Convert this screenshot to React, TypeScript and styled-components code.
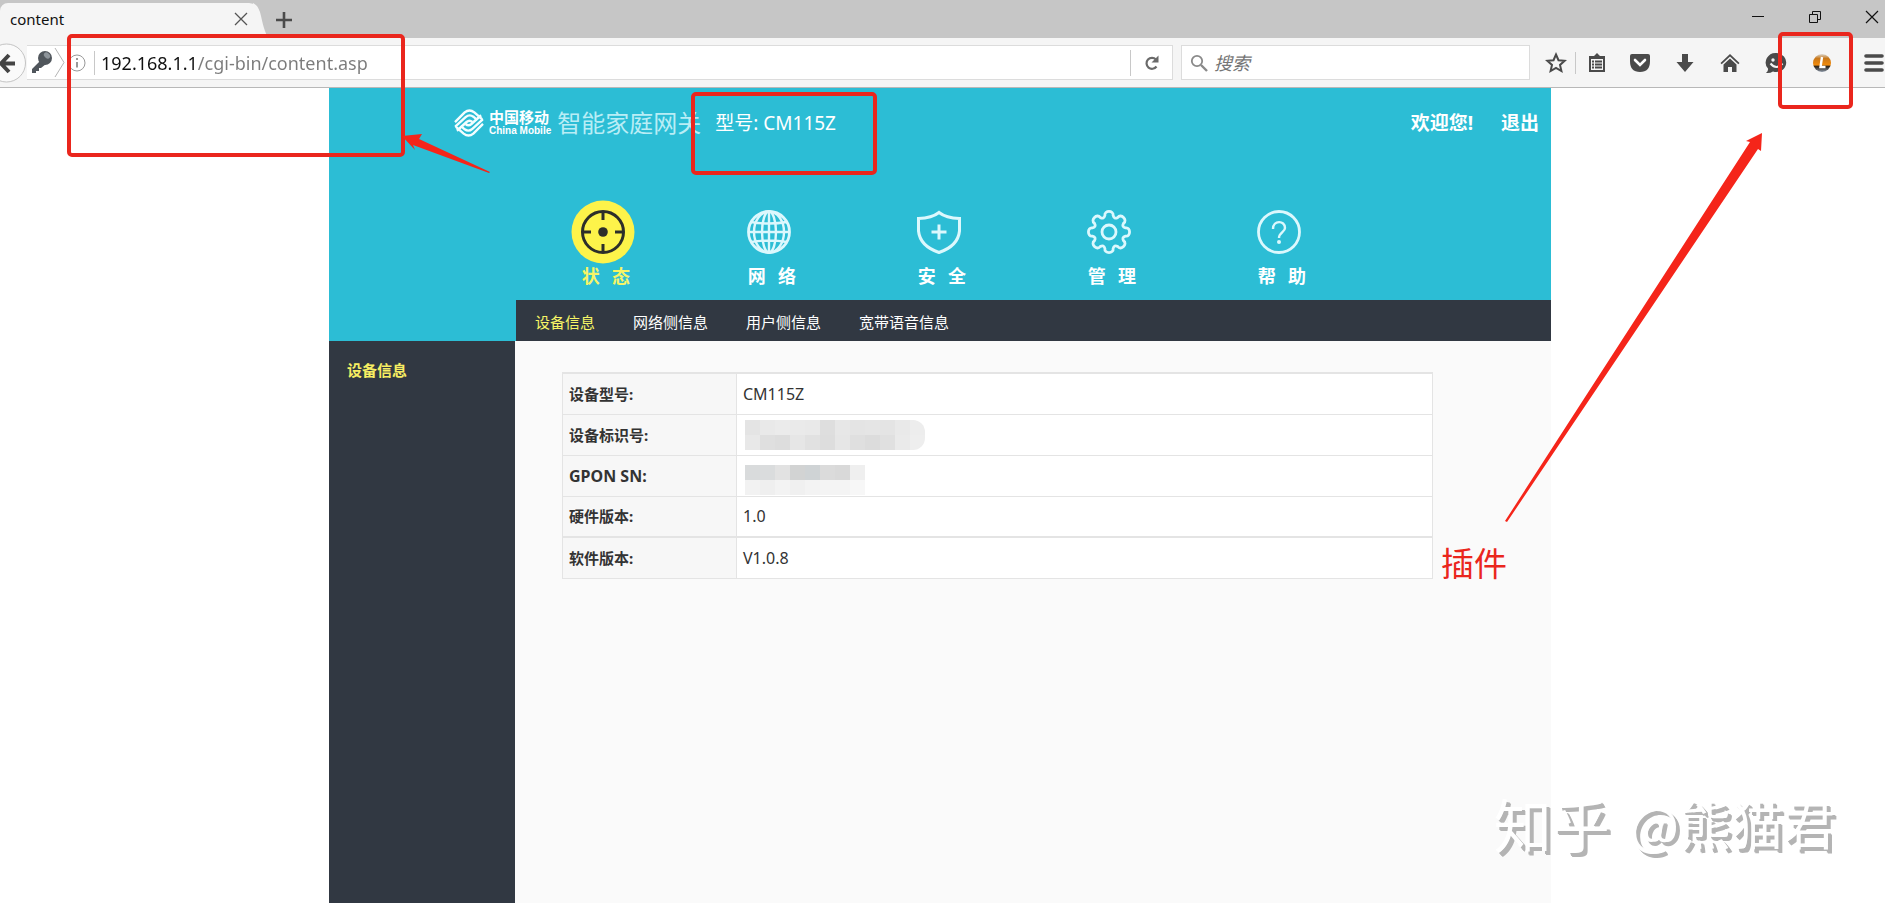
import React from "react";
import styled, { createGlobalStyle } from "styled-components";

const RED = "#ea261d";
const TEAL = "#2cbdd5";
const DARK = "#313842";
const YELLOW = "#fdf34a";
const PALE_YELLOW = "#f6f566";

const GlobalStyle = createGlobalStyle`
  * { box-sizing: border-box; }
  html, body { margin: 0; padding: 0; background: #fff; }
  body { font-family: "Noto Sans", "Noto Sans CJK SC", sans-serif; color: #333; }
  button, input { font-family: inherit; }
  a { color: inherit; text-decoration: none; }
`;

const Screen = styled.div`
  position: relative;
  display: flex;
  flex-direction: column;
  min-height: 100vh;
  overflow: hidden;
`;

const TabStrip = styled.header`
  display: flex;
  align-items: flex-end;
  height: 38px;
  background: #c6c6c6;
`;

const Tab = styled.div`
  display: flex;
  align-items: center;
  justify-content: space-between;
  width: 259px;
  height: 35px;
  padding: 0 10px 3px;
  background: #f5f5f5;
  border-radius: 8px 10px 0 0;
  font-size: 15px;
  line-height: 20px;
  color: #111;
`;

const TabEdge = styled.svg`
  width: 16px;
  height: 35px;
  margin-left: -6px;
`;

const IconButton = styled.button<{ $width?: number; $height?: number }>`
  display: flex;
  align-items: center;
  justify-content: center;
  width: ${(p) => p.$width ?? 30}px;
  height: ${(p) => p.$height ?? 34}px;
  padding: 0;
  border: 0;
  background: none;
  color: #4a4a4a;
  flex: none;
`;

const WindowControls = styled.div`
  display: flex;
  align-self: stretch;
  margin-left: auto;
  margin-right: -2px;
  gap: 27px;
  color: #111;
`;

const Toolbar = styled.div`
  display: flex;
  align-items: center;
  height: 50px;
  background: #f5f5f5;
  border-bottom: 1px solid #b8b8b8;
`;

const AddressBar = styled.div`
  display: flex;
  align-items: center;
  flex: 1;
  height: 35px;
  background: #fff;
  border: 1px solid #dcdcdc;
  border-left: 0;
`;

const Divider = styled.span<{ $height: number }>`
  width: 1px;
  height: ${(p) => p.$height}px;
  background: #c8c8c8;
  flex: none;
`;

const AddressInput = styled.input`
  flex: 1;
  min-width: 0;
  height: 32px;
  padding: 0 0 0 6px;
  border: 0;
  outline: 0;
  font-size: 18px;
  background: linear-gradient(90deg, #111 102px, #7b7b7b 102px);
  background-clip: text;
  -webkit-background-clip: text;
  color: transparent;
`;

const SearchBox = styled.label`
  display: flex;
  align-items: center;
  width: 349px;
  height: 35px;
  margin-left: 8px;
  padding: 0 8px;
  gap: 6px;
  background: #fff;
  border: 1px solid #dcdcdc;
`;

const SearchInput = styled.input`
  flex: 1;
  min-width: 0;
  border: 0;
  outline: 0;
  padding: 0;
  font-size: 18px;
  font-style: italic;
  &::placeholder { color: #757575; opacity: 1; }
`;

const ToolbarIcons = styled.div`
  display: flex;
  align-items: center;
  width: 355px;
  padding-left: 11px;
  flex: none;
  ${Divider} { margin-left: 4px; }
  > :last-child { margin-left: auto; }
`;

const Gateway = styled.main`
  display: flex;
  flex-direction: column;
  flex: 1;
  width: 100%;
  max-width: 1227px;
  padding-right: 5px;
  margin: 0 auto;
`;

const Masthead = styled.div`
  display: grid;
  grid-template-columns: 187px 1fr;
  grid-template-rows: 212px 41px;
  background: ${TEAL};
  color: #fff;
`;

const MastheadTop = styled.div`
  grid-column: 1 / 3;
  display: flex;
  flex-direction: column;
  justify-content: space-between;
  padding-bottom: 14px;
`;

const BrandRow = styled.div`
  display: flex;
  align-items: center;
  height: 69px;
  padding: 0 12px 0 125px;
`;

const BrandName = styled.div`
  display: flex;
  flex-direction: column;
  margin: 0 6px 0 5px;
  font-weight: 700;
  font-size: 15px;
  line-height: 16px;
`;

const BrandLatin = styled.span`
  font-family: "Liberation Sans", sans-serif;
  font-size: 10px;
  line-height: 12px;
`;

const ProductName = styled.h1`
  margin: 0 14px 0 0;
  font-size: 24px;
  line-height: 32px;
  font-weight: 400;
  color: #b9edf5;
`;

const Model = styled.span`
  font-size: 19px;
  line-height: 28px;
`;

const Account = styled.div`
  display: flex;
  gap: 28px;
  margin-left: auto;
  font-size: 19px;
  line-height: 28px;
  font-weight: 700;
`;

const MainNav = styled.nav`
  display: flex;
  padding-left: 193px;
`;

const NavItem = styled.a<{ $active?: boolean }>`
  display: flex;
  flex-direction: column;
  align-items: center;
  width: ${(p) => (p.$active ? 162 : 170)}px;
  color: ${(p) => (p.$active ? PALE_YELLOW : "#fff")};
  svg { display: block; }
`;

const NavLabel = styled.span`
  padding-left: 6px;
  font-family: "Noto Sans CJK SC", sans-serif;
  font-size: 18px;
  line-height: 22px;
  font-weight: 700;
  white-space: pre;
`;

const SubNav = styled.nav`
  grid-column: 2;
  display: flex;
  align-items: center;
  gap: 38px;
  padding: 2px 19px 0;
  background: ${DARK};
  font-size: 15px;
  line-height: 20px;
`;

const SubLink = styled.a<{ $active?: boolean }>`
  color: ${(p) => (p.$active ? PALE_YELLOW : "#fff")};
`;

const Body = styled.div`
  display: flex;
  flex: 1;
`;

const Sidebar = styled.aside`
  width: 186px;
  padding: 19px 18px;
  background: ${DARK};
  color: #f7ee62;
  font-size: 15px;
  line-height: 20px;
  font-weight: 700;
`;

const Content = styled.section`
  flex: 1;
  padding: 31px 118px 0 47px;
  background: #fafafa;
`;

const InfoTable = styled.table`
  width: 100%;
  border-collapse: collapse;
  border: 1px solid #e4e4e4;
  font-size: 15px;
  line-height: 20px;
  th, td {
    height: 41px;
    padding: 0 6px;
    border: 1px solid #e4e4e4;
    text-align: left;
  }
  td { background: #fff; font-size: 16px; }
  tr:first-child > *, tr:last-child > * { border-top-width: 2px; }
`;

const RowName = styled.th<{ $latin?: boolean }>`
  width: 174px;
  background: #f7f7f7;
  font-size: ${(p) => (p.$latin ? 16 : 15)}px;
  font-weight: 700;
`;

const Mosaic = styled.div<{ $radius: number; $top: number }>`
  display: grid;
  grid-template-columns: repeat(12, 15px);
  grid-auto-rows: 15px;
  width: max-content;
  margin: ${(p) => p.$top}px 0 0 2px;
  border-radius: 0 ${(p) => p.$radius}px ${(p) => p.$radius}px 0;
  overflow: hidden;
`;

const Tile = styled.span<{ $shade: string }>`
  background: ${(p) => p.$shade};
`;

const Frame = styled.div<{ $x: number; $y: number; $w: number; $h: number }>`
  position: absolute;
  left: ${(p) => p.$x}px;
  top: ${(p) => p.$y}px;
  width: ${(p) => p.$w}px;
  height: ${(p) => p.$h}px;
  border: 4px solid ${RED};
  border-radius: 5px;
  pointer-events: none;
`;

const Arrows = styled.svg`
  position: absolute;
  left: 0;
  top: 0;
  pointer-events: none;
`;

const PluginNote = styled.span`
  position: absolute;
  left: 1441px;
  top: 538px;
  font-family: "Noto Sans CJK SC", sans-serif;
  font-size: 33px;
  line-height: 48px;
  color: ${RED};
`;

const Watermark = styled.div`
  position: absolute;
  right: 50px;
  bottom: 44px;
  display: flex;
  align-items: center;
  gap: 20px;
  font-family: "Noto Sans CJK SC", sans-serif;
  font-size: 52px;
  line-height: 72px;
  color: #fff;
  white-space: nowrap;
  text-shadow: 3px 3px 0 #b4b4b4, 4px 4px 0 #b4b4b4;
`;

const WatermarkSite = styled.span`
  font-size: 58px;
`;

const LogoMark = () => {
  const band = (
    <>
      <path d="M1 15Q7 9 11 5Q16 1 21 5L29 12" />
      <path d="M1 20L12 10Q16 6.500 20 9.500L24 13" />
      <path d="M3 24L13 15Q16 12.500 19 15" />
    </>
  );
  return (
    <svg width="30" height="32" viewBox="0 0 31 32" fill="none" stroke="#f4feff" strokeWidth="2.500">
      <clipPath id="logo-round">
        <ellipse cx="15.500" cy="16" rx="15.500" ry="16" />
      </clipPath>
      <g clipPath="url(#logo-round)">
        {band}
        <g transform="rotate(180 15.500 16)">{band}</g>
      </g>
    </svg>
  );
};

const StatusIcon = () => (
  <svg width="64" height="64" viewBox="0 0 64 64" fill="none" stroke="#2d2e2a" strokeWidth="3">
    <circle cx="32" cy="32" r="31.500" fill={YELLOW} stroke="none" />
    <circle cx="32" cy="32" r="20.500" />
    <path d="M32 11v9M32 44v9M11 32h9M44 32h9" />
    <circle cx="32" cy="32" r="4.800" fill="#2d2e2a" stroke="none" />
  </svg>
);

const GlobeIcon = () => (
  <svg width="64" height="64" viewBox="0 0 64 64" fill="none" stroke="#dcf8fd" strokeWidth="2.400">
    <circle cx="32" cy="32" r="20.500" strokeWidth="2.800" />
    <ellipse cx="32" cy="32" rx="15" ry="20.500" />
    <ellipse cx="32" cy="32" rx="7" ry="20.500" />
    <path d="M32 11v42M11 32h42M14 22q18 3 36 0M14 42q18-3 36 0" />
  </svg>
);

const ShieldIcon = () => (
  <svg width="64" height="64" viewBox="0 0 64 64" fill="none" stroke="#dcf8fd" strokeWidth="3">
    <path d="M32 12.500Q25 18 11.500 18.500V31Q13 46 32 52.500Q51 46 52.500 31V18.500Q39 18 32 12.500Z" />
    <path d="M32 24.500v15M24.500 32h15" />
  </svg>
);

const GearIcon = () => {
  // Eight rounded teeth joined by concave valleys.
  const teeth = Array.from({ length: 8 }, (_, i) => i * 45);
  const at = (deg: number, r: number) => {
    const a = ((deg - 90) * Math.PI) / 180;
    return `${(32 + r * Math.cos(a)).toFixed(2)} ${(32 + r * Math.sin(a)).toFixed(2)}`;
  };
  const d =
    `M${at(-14, 17)}` +
    teeth.map((t) => `C${at(t - 13, 22.5)} ${at(t + 13, 22.5)} ${at(t + 14, 17)}Q${at(t + 22.5, 13.5)} ${at(t + 31, 17)}`).join("") +
    "Z";
  return (
    <svg width="64" height="64" viewBox="0 0 64 64" fill="none" stroke="#dcf8fd" strokeWidth="2.800">
      <path d={d} />
      <circle cx="32" cy="32" r="7" />
    </svg>
  );
};

const HelpIcon = () => (
  <svg width="64" height="64" viewBox="0 0 64 64" fill="none" stroke="#dcf8fd" strokeWidth="2.800">
    <circle cx="32" cy="32" r="20.500" />
    <path strokeWidth="2.400" d="M26 29C26 20 38 20 38 28C38 32 32 32.500 32 38" />
    <circle cx="32" cy="42" r="2" fill="#dcf8fd" stroke="none" />
  </svg>
);

const NAV = [
  { label: "状   态", Icon: StatusIcon },
  { label: "网   络", Icon: GlobeIcon },
  { label: "安   全", Icon: ShieldIcon },
  { label: "管   理", Icon: GearIcon },
  { label: "帮   助", Icon: HelpIcon },
];

const SUBNAV = ["设备信息", "网络侧信息", "用户侧信息", "宽带语音信息"];

const ID_TILES = [
  "#e4e4e4", "#e9e9e9", "#ebebeb", "#eaeaea", "#e9e9e9", "#dedede", "#e7e7e7", "#e4e4e4", "#e5e5e5", "#e4e4e4", "#e9e9e9", "#ededed",
  "#e8e8e8", "#dfdfdf", "#dddddd", "#e6e6e6", "#e1e1e1", "#dddddd", "#e6e6e6", "#dfdfdf", "#dcdcdc", "#e0e0e0", "#eaeaea", "#eeeeee",
];

const SN_TILES = [
  "#d9dbdc", "#dadcdd", "#e2e2e2", "#d2d3d3", "#cfd3d5", "#dbdbdb", "#d9d9d9", "#efefef", "#fff", "#fff", "#fff", "#fff",
  "#f2f2f2", "#efefef", "#f3f3f3", "#f0f0f0", "#f3f3f3", "#f4f4f4", "#f4f4f4", "#f7f7f7", "#fff", "#fff", "#fff", "#fff",
];

const Redacted = ({ tiles, radius, top }: { tiles: string[]; radius: number; top: number }) => (
  <Mosaic $radius={radius} $top={top}>
    {tiles.map((shade, i) => (
      <Tile key={i} $shade={shade} />
    ))}
  </Mosaic>
);

const ROWS: { name: string; value: React.ReactNode; latin?: boolean }[] = [
  { name: "设备型号:", value: "CM115Z" },
  { name: "设备标识号:", value: <Redacted tiles={ID_TILES} radius={12} top={0} /> },
  { name: "GPON SN:", value: <Redacted tiles={SN_TILES} radius={0} top={8} />, latin: true },
  { name: "硬件版本:", value: "1.0" },
  { name: "软件版本:", value: "V1.0.8" },
];

export default function App() {
  return (
    <Screen>
      <GlobalStyle />
      <TabStrip>
        <Tab>
          content
          <IconButton $width={16} aria-label="关闭标签页">
            <svg width="14" height="14" viewBox="0 0 14 14" stroke="#555" strokeWidth="1.300">
              <path d="M1 1l12 12M13 1L1 13" />
            </svg>
          </IconButton>
        </Tab>
        <TabEdge viewBox="0 0 16 35">
          <path d="M0 0Q6 3 8 13Q12 32 16 35H0Z" fill="#f5f5f5" />
        </TabEdge>
        <IconButton $height={37} aria-label="新标签页">
          <svg width="16" height="16" viewBox="0 0 16 16" stroke="#4a4a4a" strokeWidth="2.600">
            <path d="M8 0v16M0 8h16" />
          </svg>
        </IconButton>
        <WindowControls>
          <IconButton aria-label="最小化">
            <svg width="14" height="14" viewBox="0 0 14 14" stroke="#111">
              <path d="M1 6.500h12" />
            </svg>
          </IconButton>
          <IconButton aria-label="还原">
            <svg width="14" height="14" viewBox="0 0 14 14" stroke="#111" fill="none">
              <path d="M1.500 4.500h8v8h-8zM4.500 4.500v-3h8v8h-3" />
            </svg>
          </IconButton>
          <IconButton aria-label="关闭">
            <svg width="14" height="14" viewBox="0 0 14 14" stroke="#111" strokeWidth="1.200">
              <path d="M1 1l12 12M13 1L1 13" />
            </svg>
          </IconButton>
        </WindowControls>
      </TabStrip>

      <Toolbar>
        <IconButton $width={27} $height={40} aria-label="后退">
          <svg width="27" height="40" viewBox="0 0 27 40">
            <circle cx="6.500" cy="20" r="19" fill="#fafafa" stroke="#c4c4c4" />
            <path d="M15 20.500H1M9 12L1 20.500L9 29" fill="none" stroke="#444" strokeWidth="4" />
          </svg>
        </IconButton>
        <AddressBar>
          <svg width="40" height="33" viewBox="0 0 40 33" fill="none">
            <path d="M5 23L14 14L19 18L14 22H12V25H9V27H5Z" fill="#50565c" />
            <circle cx="18" cy="12" r="7" fill="#50565c" />
            <ellipse cx="20" cy="9.500" rx="3.500" ry="2.500" fill="#8d949a" transform="rotate(40 20 9.500)" />
            <path d="M28 2L37 16.500L28 31" stroke="#b5b5b5" />
          </svg>
          <svg width="27" height="20" viewBox="0 0 27 20" fill="none" stroke="#999">
            <circle cx="10" cy="10" r="8" />
            <path d="M10 9v5.500M10 5v2" strokeWidth="2" />
          </svg>
          <Divider $height={24} />
          <AddressInput aria-label="地址" defaultValue="192.168.1.1/cgi-bin/content.asp" />
          <Divider $height={26} />
          <IconButton $width={41} $height={33} aria-label="刷新">
            <svg width="18" height="18" viewBox="0 0 18 18" fill="none" stroke="#6a6a6a" strokeWidth="2.200">
              <path d="M13.500 12.500A5.500 5.500 0 1 1 13 5.500" />
              <path d="M15.500 1.500V8.500H8.500Z" fill="#6a6a6a" stroke="none" />
            </svg>
          </IconButton>
        </AddressBar>
        <SearchBox>
          <svg width="18" height="18" viewBox="0 0 18 18" fill="none" stroke="#8a8a8a">
            <circle cx="7" cy="7" r="5.200" strokeWidth="1.800" />
            <path d="M11 11l6 6" strokeWidth="2.400" />
          </svg>
          <SearchInput aria-label="搜索" placeholder="搜索" />
        </SearchBox>
        <ToolbarIcons>
          <IconButton aria-label="收藏">
            <svg width="22" height="22" viewBox="0 0 22 22" fill="none" stroke="#4a4a4a" strokeWidth="2">
              <path d="M11 2.500l2.500 5.700 6.200.6-4.700 4.100 1.400 6.100L11 15.800 5.600 19 7 12.900 2.300 8.800l6.200-.6z" />
            </svg>
          </IconButton>
          <Divider $height={22} />
          <IconButton $width={41} aria-label="书签">
            <svg width="18" height="20" viewBox="0 0 18 20" fill="#4a4a4a">
              <path d="M6 3L9 0l3 3h5v16H1V3zM3 6v11h12V6z" fillRule="evenodd" />
              <path d="M4 7.500h2v2H4zM7 7.500h7v2H7zM4 10.500h2v2H4zM7 10.500h7v2H7zM4 13.500h2v2H4zM7 13.500h7v2H7z" />
            </svg>
          </IconButton>
          <IconButton $width={45} aria-label="Pocket">
            <svg width="22" height="20" viewBox="0 0 22 20">
              <path d="M1 3Q1 1 3 1H19Q21 1 21 3V8Q21 19 11 19Q1 19 1 8Z" fill="#4a4a4a" />
              <path d="M6 7l5 5 5-5" fill="none" stroke="#fff" strokeWidth="2.600" strokeLinecap="round" />
            </svg>
          </IconButton>
          <IconButton $width={45} aria-label="下载">
            <svg width="18" height="20" viewBox="0 0 18 20" fill="#4a4a4a">
              <path d="M6 1h6v8h5.500L9 19 .5 9H6z" />
            </svg>
          </IconButton>
          <IconButton $width={46} aria-label="主页">
            <svg width="20" height="20" viewBox="0 0 20 20" fill="#4a4a4a">
              <path d="M10 1L.5 10l1.200 1.300L10 3.500l8.300 7.800L19.500 10z" />
              <path d="M10 5.500L3.500 11.500V19H8v-5h4v5h4.500v-7.500z" />
            </svg>
          </IconButton>
          <IconButton $width={46} aria-label="聊天">
            <svg width="24" height="22" viewBox="0 0 24 22">
              <path d="M12.500 1A10 9.500 0 1 1 9 19.500Q6 21.500 2 21Q4.500 19 4 16.500A10 9.500 0 0 1 12.500 1Z" fill="#4a4a4a" />
              <circle cx="9" cy="8" r="1.700" fill="#f5f5f5" />
              <circle cx="16" cy="8" r="1.700" fill="#f5f5f5" />
              <path d="M6.500 11.500Q12.500 18.500 18.500 11.500" fill="none" stroke="#f5f5f5" strokeWidth="2" />
            </svg>
          </IconButton>
          <IconButton $width={46} aria-label="插件">
            <svg width="20" height="20" viewBox="0 0 20 20">
              <defs>
                <linearGradient id="plugin-fill" x1="0" y1="0" x2="0" y2="1">
                  <stop offset="0" stopColor="#d9d6cf" />
                  <stop offset="0.250" stopColor="#c9781a" />
                  <stop offset="0.600" stopColor="#f08a0c" />
                  <stop offset="0.700" stopColor="#2c241c" />
                  <stop offset="1" stopColor="#8b97a6" />
                </linearGradient>
              </defs>
              <circle cx="10" cy="10" r="9" fill="url(#plugin-fill)" />
              <path d="M10 4L8.500 14H13.500" fill="none" stroke="#fff" strokeWidth="2.400" />
            </svg>
          </IconButton>
          <IconButton $width={22} aria-label="菜单">
            <svg width="20" height="18" viewBox="0 0 20 18" stroke="#4a4a4a" strokeWidth="3.600" strokeLinecap="round">
              <path d="M2 2h16M2 9h16M2 16h16" />
            </svg>
          </IconButton>
        </ToolbarIcons>
      </Toolbar>

      <Gateway>
        <Masthead>
          <MastheadTop>
            <BrandRow>
              <LogoMark />
              <BrandName>
                中国移动
                <BrandLatin>China Mobile</BrandLatin>
              </BrandName>
              <ProductName>智能家庭网关</ProductName>
              <Model>型号: CM115Z</Model>
              <Account>
                <span>欢迎您!</span>
                <a href="#logout">退出</a>
              </Account>
            </BrandRow>
            <MainNav>
              {NAV.map(({ label, Icon }, i) => (
                <NavItem key={label} href={`#nav-${i}`} $active={i === 0}>
                  <Icon />
                  <NavLabel>{label}</NavLabel>
                </NavItem>
              ))}
            </MainNav>
          </MastheadTop>
          <SubNav>
            {SUBNAV.map((label, i) => (
              <SubLink key={label} href={`#sub-${i}`} $active={i === 0}>
                {label}
              </SubLink>
            ))}
          </SubNav>
        </Masthead>
        <Body>
          <Sidebar>
            <a href="#device">设备信息</a>
          </Sidebar>
          <Content>
            <InfoTable>
              <tbody>
                {ROWS.map((row) => (
                  <tr key={row.name}>
                    <RowName scope="row" $latin={row.latin}>{row.name}</RowName>
                    <td>{row.value}</td>
                  </tr>
                ))}
              </tbody>
            </InfoTable>
          </Content>
        </Body>
      </Gateway>

      <Frame $x={67} $y={34} $w={338} $h={123} />
      <Frame $x={691} $y={92} $w={186} $h={83} />
      <Frame $x={1778} $y={32} $w={75} $h={77} />
      <Arrows width="1885" height="600" viewBox="0 0 1885 600" fill="#f5251a">
        <path d="M402 136L422 134L419 139L490 172L489 173L413 145L415 150Z" />
        <path d="M1762 133L1746 141L1750 142L1505 521L1507 522L1758 149L1761 151Z" />
      </Arrows>
      <PluginNote>插件</PluginNote>
      <Watermark>
        <WatermarkSite>知乎</WatermarkSite>
        <span>@熊猫君</span>
      </Watermark>
    </Screen>
  );
}
